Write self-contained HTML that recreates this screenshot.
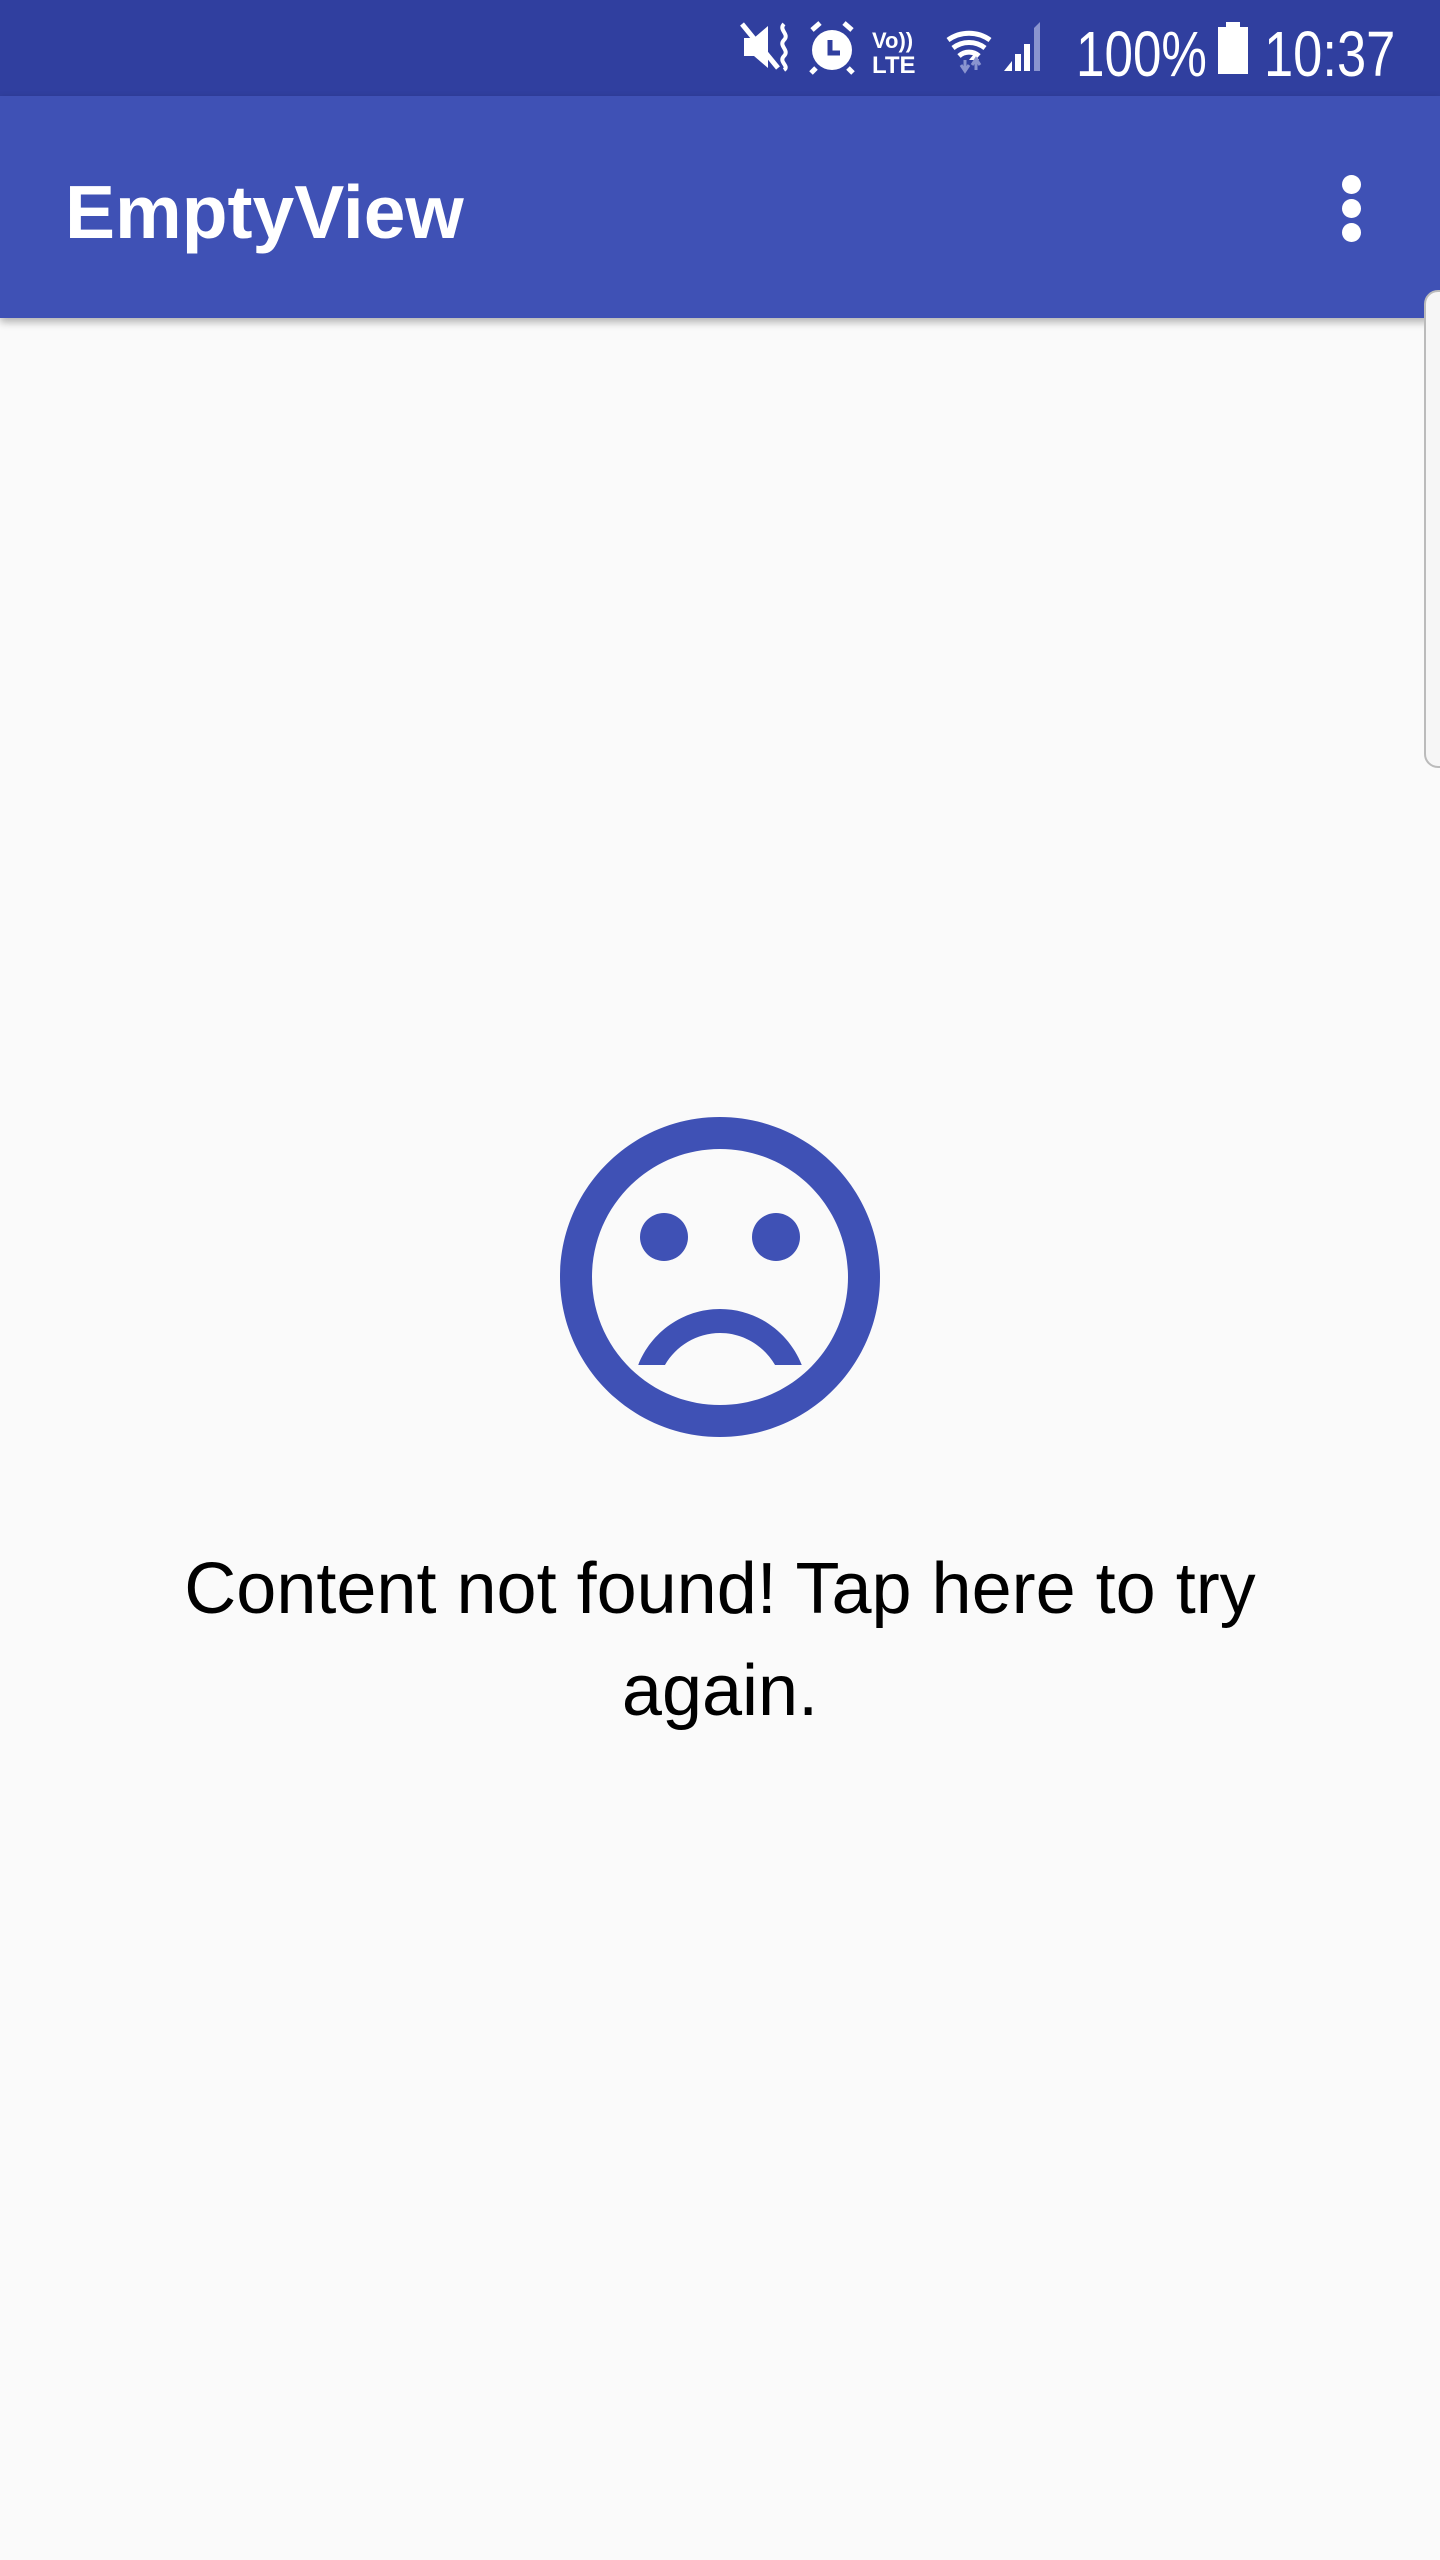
<!DOCTYPE html>
<html><head><meta charset="utf-8"><style>
html,body{margin:0;padding:0;}
body{width:1440px;height:2560px;background:#fafafa;position:relative;overflow:hidden;font-family:"Liberation Sans",sans-serif;}
.sb{position:absolute;left:0;top:0;width:1440px;height:96px;background:#303f9f;}
.ab{position:absolute;left:0;top:96px;width:1440px;height:222px;background:#3f51b5;box-shadow:0 4px 8px rgba(0,0,0,0.3);}
.title{position:absolute;left:65px;font-size:75px;font-weight:bold;color:#fff;line-height:1;}
.dot{position:absolute;left:1342px;width:19px;height:19px;border-radius:50%;background:#fff;}
.st{position:absolute;color:#fff;font-size:64px;line-height:1;top:22px;transform-origin:left top;transform:scaleX(0.82);}
.msg{position:absolute;left:0;width:1440px;top:1538px;text-align:center;font-size:72px;line-height:102px;color:#000;}
.handle{position:absolute;left:1424px;top:290px;width:30px;height:474px;border:2px solid #bbb;border-radius:14px;background:#f6f6f6;}
</style></head><body>
<div class="sb">
<svg style="position:absolute;left:740px;top:20px" width="320" height="56" viewBox="0 0 320 56">
 <g fill="#fff">
  <path d="M4 18h10l14-12v42L14 36H4z"/>
  <path d="M2 4l36 44" stroke="#fff" stroke-width="5"/>
  <path d="M44 4c-6 6 6 10 0 16s6 10 0 16s6 10 0 14" stroke="#fff" stroke-width="4" fill="none"/>
  <circle cx="92" cy="30" r="20"/>
  <path d="M72 10l8-7M112 10l-8-7M76 48l-5 5M108 48l5 5" stroke="#fff" stroke-width="5"/>
  <path d="M90 20v13h10" stroke="#303f9f" stroke-width="5" fill="none"/>
  <text x="132" y="28" font-size="22" font-weight="bold" font-family="Liberation Sans">Vo))</text>
  <text x="132" y="53" font-size="24" font-weight="bold" font-family="Liberation Sans">LTE</text>
  <path d="M208 20a36 36 0 0 1 42 0M213 28a26 26 0 0 1 32 0M219 36a15 15 0 0 1 20 0" stroke="#fff" stroke-width="5" fill="none"/>
  <path d="M229 40l5-6 5 6z"/>
  <path d="M225 50v-10M221 45l4 6 4-6" stroke="#8a94cf" stroke-width="3" fill="none"/>
  <path d="M236 40v10M232 45l4-6 4 6" stroke="#8a94cf" stroke-width="3" fill="none"/>
  <path d="M264 51l8-10v10z"/>
  <rect x="275" y="34" width="6" height="17"/>
  <rect x="284" y="24" width="6" height="27"/>
  <path d="M294 51V8l6-6v49z" fill="#8a94cf"/>
 </g>
</svg>
<div class="st" style="left:1076px;transform:scaleX(0.8)">100%</div>
<svg style="position:absolute;left:1216px;top:22px" width="34" height="52"><rect x="10" y="0" width="14" height="6" fill="#fff"/><rect x="2" y="5" width="30" height="47" fill="#fff"/></svg>
<div class="st" style="left:1264px">10:37</div>
</div>
<div class="ab">
<div class="title" style="top:79px">EmptyView</div>
<div class="dot" style="top:79px"></div>
<div class="dot" style="top:103px"></div>
<div class="dot" style="top:127px"></div>
</div>
<div class="handle"></div>
<svg style="position:absolute;left:528px;top:1085px" width="384" height="384" viewBox="0 0 24 24">
 <g fill="#3f51b5">
  <circle cx="15.5" cy="9.5" r="1.5"/><circle cx="8.5" cy="9.5" r="1.5"/>
  <path d="M11.99 2C6.47 2 2 6.480 2 12s4.47 10 9.99 10C17.52 22 22 17.52 22 12S17.52 2 11.99 2zM12 20c-4.42 0-8-3.58-8-8s3.58-8 8-8 8 3.58 8 8-3.58 8-8 8z"/>
  <path d="M12 14c-2.33 0-4.31 1.46-5.11 3.5h1.67c.69-1.19 1.970-2 3.44-2s2.75.81 3.44 2h1.67c-.8-2.04-2.78-3.5-5.11-3.5z"/>
 </g>
</svg>
<div class="msg">Content not found! Tap here to try<br>again.</div>
</body></html>
